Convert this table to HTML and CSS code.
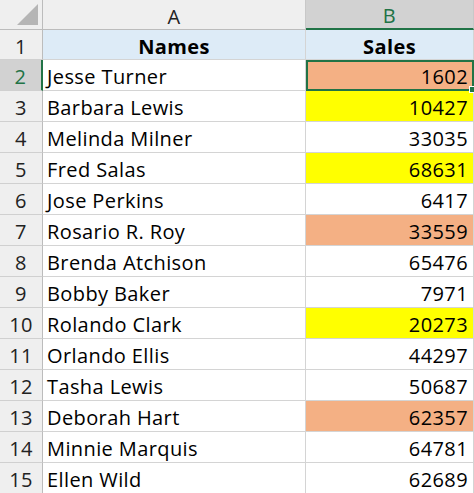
FILE: index.html
```html
<!DOCTYPE html>
<html>
<head>
<meta charset="utf-8">
<link rel="stylesheet" href="styles.css">
</head>
<body>
<div class="sheet">
  <div class="corner"><span class="tri"></span></div>
  <div class="colh">A</div>
  <div class="colh sel">B</div>

  <div class="rowh">1</div><div class="cell hd">Names</div><div class="cell hd">Sales</div>
  <div class="rowh sel">2</div><div class="cell">Jesse Turner</div><div class="cell num orange active">1602<span class="handle"></span></div>
  <div class="rowh">3</div><div class="cell">Barbara Lewis</div><div class="cell num yellow">10427</div>
  <div class="rowh">4</div><div class="cell">Melinda Milner</div><div class="cell num">33035</div>
  <div class="rowh">5</div><div class="cell">Fred Salas</div><div class="cell num yellow">68631</div>
  <div class="rowh">6</div><div class="cell">Jose Perkins</div><div class="cell num">6417</div>
  <div class="rowh">7</div><div class="cell">Rosario R. Roy</div><div class="cell num orange">33559</div>
  <div class="rowh">8</div><div class="cell">Brenda Atchison</div><div class="cell num">65476</div>
  <div class="rowh">9</div><div class="cell">Bobby Baker</div><div class="cell num">7971</div>
  <div class="rowh">10</div><div class="cell">Rolando Clark</div><div class="cell num yellow">20273</div>
  <div class="rowh">11</div><div class="cell">Orlando Ellis</div><div class="cell num">44297</div>
  <div class="rowh">12</div><div class="cell">Tasha Lewis</div><div class="cell num">50687</div>
  <div class="rowh">13</div><div class="cell">Deborah Hart</div><div class="cell num orange">62357</div>
  <div class="rowh">14</div><div class="cell">Minnie Marquis</div><div class="cell num">64781</div>
  <div class="rowh">15</div><div class="cell">Ellen Wild</div><div class="cell num">62689</div>
</div>
</body>
</html>
```
FILE: styles.css
```css
html, body {
  margin: 0;
  padding: 0;
  background: #ffffff;
  overflow: hidden;
}
.sheet {
  display: grid;
  grid-template-columns: 43px 263px 168px;
  grid-template-rows: 30px 30px repeat(14, 31px);
  font-family: "Open Sans", Lato, sans-serif;
  font-size: 20px;
  letter-spacing: 0.4px;
  color: #000;
}
.sheet > div {
  box-sizing: border-box;
  border-right: 1px solid #d4d4d4;
  border-bottom: 1px solid #d4d4d4;
  display: flex;
  align-items: center;
  padding-top: 3px;
  white-space: nowrap;
  overflow: visible;
}
.corner {
  background: #efefef;
  position: relative;
  border-right-color: #bcbcbc !important;
  border-bottom-color: #bcbcbc !important;
}
.tri {
  position: absolute;
  right: 4px;
  bottom: 4px;
  width: 0;
  height: 0;
  border-left: 21px solid transparent;
  border-bottom: 21px solid #b5b5b5;
}
.colh {
  background: #efefef;
  justify-content: center;
  color: #222;
  border-bottom-color: #bcbcbc !important;
  border-right-color: #c8c8c8 !important;
}
.colh.sel {
  background: #d2d2d2;
  color: #217346;
  border-bottom: 2px solid #217346 !important;
}
.rowh {
  background: #efefef;
  justify-content: center;
  color: #222;
  border-right-color: #bcbcbc !important;
  border-bottom-color: #d0d0d0 !important;
}
.rowh.sel {
  background: #d2d2d2;
  color: #217346;
  border-right: 2px solid #217346 !important;
}
.cell {
  padding-left: 4px;
  background: #fff;
}
.cell.hd {
  background: #ddebf7;
  justify-content: center;
  font-weight: bold;
  padding-left: 0;
}
.cell.num {
  justify-content: flex-end;
  padding-right: 5px;
}
.orange { background: #f4b084 !important; }
.yellow { background: #ffff00 !important; }
.active {
  position: relative;
  outline: 2px solid #217346;
  outline-offset: -2px;
}
.handle {
  position: absolute;
  right: -3px;
  bottom: -3px;
  width: 5px;
  height: 5px;
  background: #217346;
  border: 1px solid #fff;
}
```
